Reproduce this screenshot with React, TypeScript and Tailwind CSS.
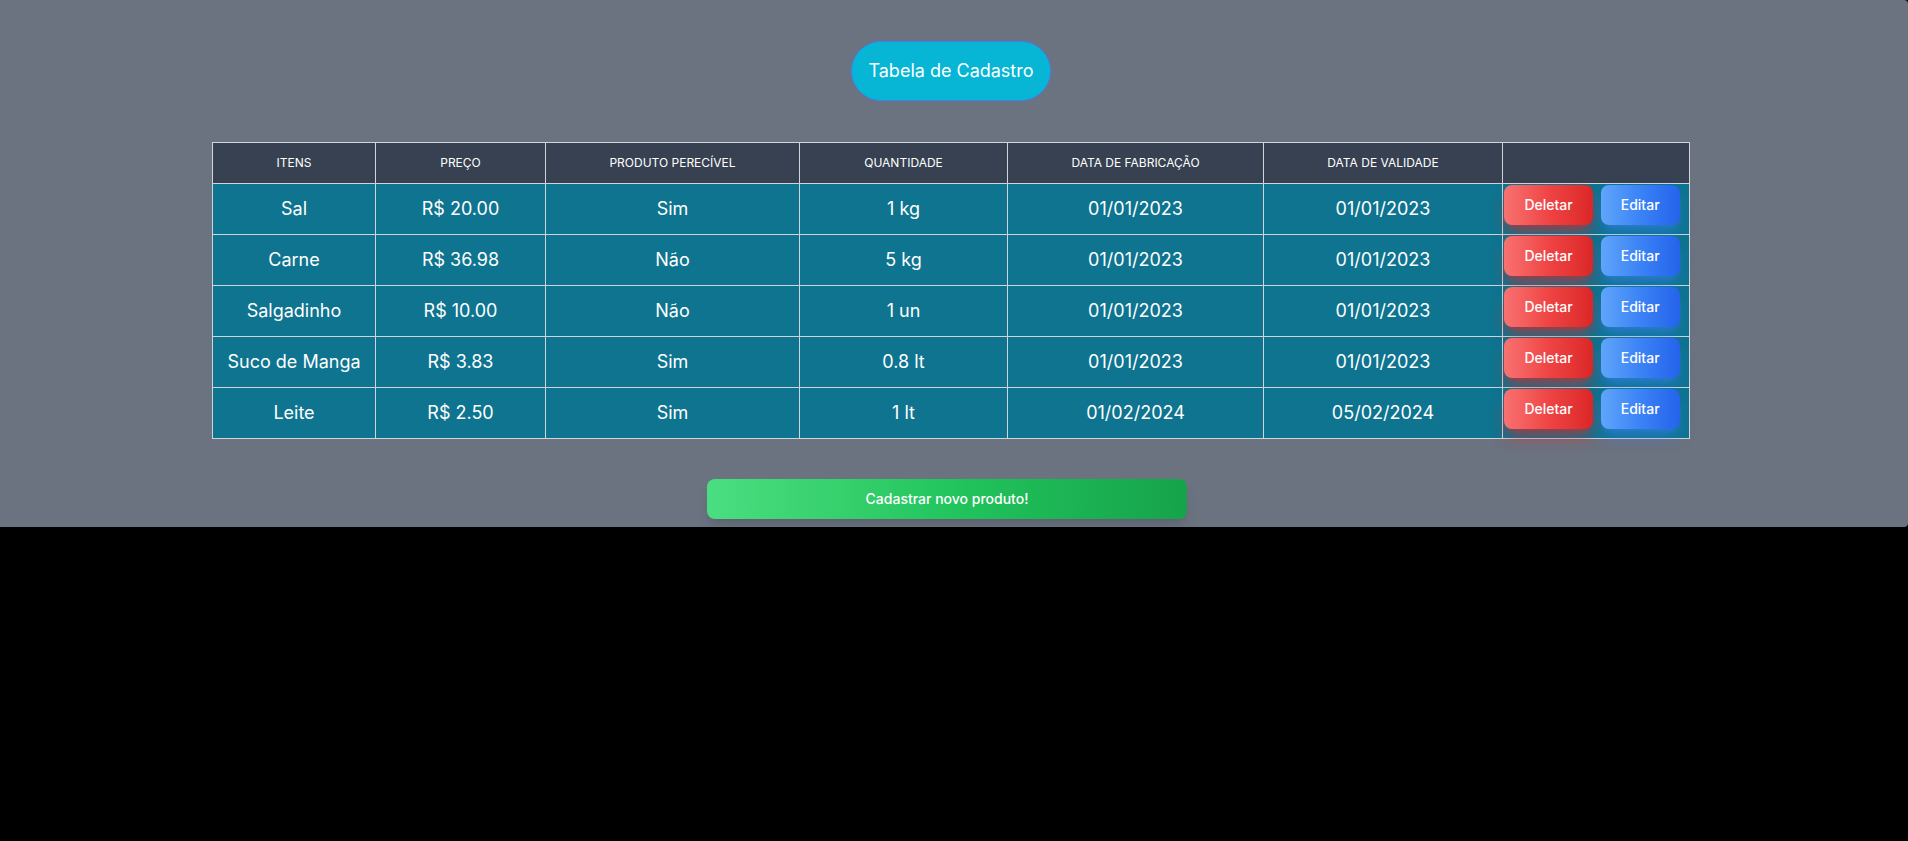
import React from 'react';

type Produto = {
  item: string;
  preco: string;
  perecivel: string;
  quantidade: string;
  fabricacao: string;
  validade: string;
};

const produtos: Produto[] = [
  { item: 'Sal', preco: 'R$ 20.00', perecivel: 'Sim', quantidade: '1 kg', fabricacao: '01/01/2023', validade: '01/01/2023' },
  { item: 'Carne', preco: 'R$ 36.98', perecivel: 'Não', quantidade: '5 kg', fabricacao: '01/01/2023', validade: '01/01/2023' },
  { item: 'Salgadinho', preco: 'R$ 10.00', perecivel: 'Não', quantidade: '1 un', fabricacao: '01/01/2023', validade: '01/01/2023' },
  { item: 'Suco de Manga', preco: 'R$ 3.83', perecivel: 'Sim', quantidade: '0.8 lt', fabricacao: '01/01/2023', validade: '01/01/2023' },
  { item: 'Leite', preco: 'R$ 2.50', perecivel: 'Sim', quantidade: '1 lt', fabricacao: '01/02/2024', validade: '05/02/2024' },
];

const headers = ['Itens', 'Preço', 'Produto Perecível', 'Quantidade', 'Data de Fabricação', 'Data de Validade', ''];

const App: React.FC = () => {
  return (
    <div className="min-h-[841px] bg-black font-['Inter','Noto_Sans',sans-serif] text-white">
      <div className="flex flex-col items-center bg-[#6b7280] pt-[41px] pb-2 pr-1.5 rounded-r-sm">
        <h1 className="h-[60px] px-4 flex items-center rounded-full border border-[#3b82f6] bg-[#06b6d4] text-lg text-white">
          Tabela de Cadastro
        </h1>

        <table className="mt-[41px] w-[1477px] table-fixed border-collapse text-center">
          <colgroup>
            <col className="w-[163px]" />
            <col className="w-[170px]" />
            <col className="w-[254px]" />
            <col className="w-[208px]" />
            <col className="w-[256px]" />
            <col className="w-[239px]" />
            <col className="w-[187px]" />
          </colgroup>
          <thead>
            <tr className="h-[41px] bg-[#374151]">
              {headers.map((h, i) => (
                <th key={i} className="border border-[#d1d5db] text-xs font-normal uppercase">
                  {h}
                </th>
              ))}
            </tr>
          </thead>
          <tbody>
            {produtos.map((p) => (
              <tr key={p.item} className="h-[51px] bg-[#0e7490] text-lg">
                <td className="border border-[#d1d5db]">{p.item}</td>
                <td className="border border-[#d1d5db]">{p.preco}</td>
                <td className="border border-[#d1d5db]">{p.perecivel}</td>
                <td className="border border-[#d1d5db]">{p.quantidade}</td>
                <td className="border border-[#d1d5db]">{p.fabricacao}</td>
                <td className="border border-[#d1d5db]">{p.validade}</td>
                <td className="border border-[#d1d5db] p-0 align-top">
                  <div className="flex justify-center gap-2 pr-2 pt-px">
                    <button className="h-10 px-5 rounded-lg bg-gradient-to-r from-[#f87171] via-[#ef4444] to-[#dc2626] text-sm font-medium text-white shadow-lg shadow-[#dc2626]/60">
                      Deletar
                    </button>
                    <button className="h-10 px-5 rounded-lg bg-gradient-to-r from-[#60a5fa] via-[#3b82f6] to-[#2563eb] text-sm font-medium text-white shadow-lg shadow-[#3b82f6]/50">
                      Editar
                    </button>
                  </div>
                </td>
              </tr>
            ))}
          </tbody>
        </table>

        <button className="mt-10 mr-2 h-10 w-[480px] rounded-lg bg-gradient-to-r from-[#4ade80] via-[#22c55e] to-[#16a34a] text-sm font-medium text-white shadow-lg">
          Cadastrar novo produto!
        </button>
      </div>
    </div>
  );
};

export default App;
